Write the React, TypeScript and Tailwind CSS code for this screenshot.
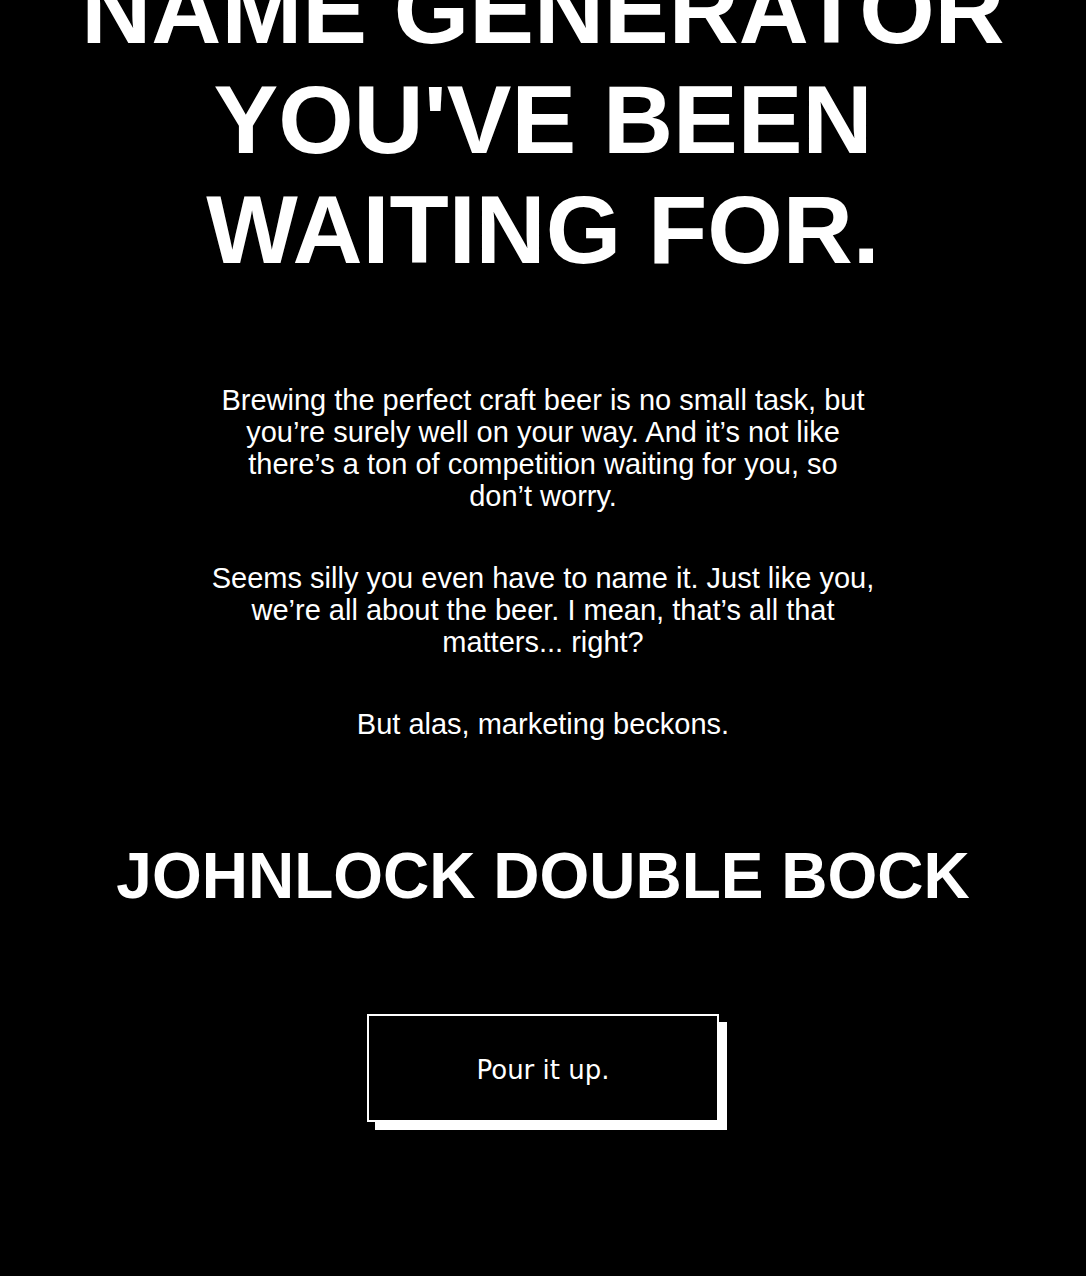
import React from 'react';

const App: React.FC = () => {
  return (
    <div className="min-h-screen bg-black text-white font-['Liberation_Sans',Arial,sans-serif] overflow-hidden">
      <div className="flex flex-col items-center px-10 pb-[146px]">
        <h1 className="-mt-[45px] text-center text-[97px] leading-[110px] font-bold uppercase">
          Name Generator you've been waiting for.
        </h1>

        <div className="mt-[99px] w-[664px] flex flex-col gap-[50px] text-center text-[29px] leading-[32px]">
          <p>
            Brewing the perfect craft beer is no small task, but you’re surely well on your way. And it’s not like
            there’s a ton of competition waiting for you, so
            <br />
            don’t worry.
          </p>
          <p>
            Seems silly you even have to name it. Just like you, we’re all about the beer. I mean, that’s all that
            matters... right?
          </p>
          <p>But alas, marketing beckons.</p>
        </div>

        <h2 className="mt-[104px] text-center text-[64px] leading-[64px] font-bold uppercase">
          Johnlock Double Bock
        </h2>

        <button
          type="button"
          className="mt-[106px] w-[352px] h-[108px] pt-[4px] bg-black border-2 border-white shadow-[8px_8px_0_#ffffff] text-white text-[26px] font-['DejaVu_Sans',sans-serif]"
        >
          Pour it up.
        </button>
      </div>
    </div>
  );
};

export default App;
